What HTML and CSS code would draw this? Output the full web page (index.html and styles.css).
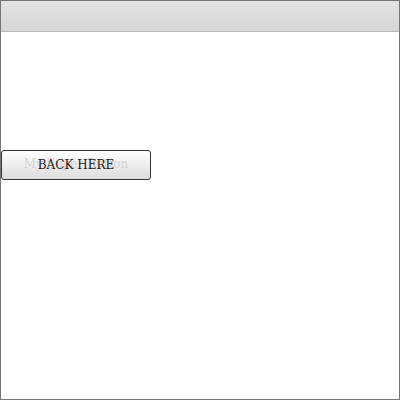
FILE: index.html
```html
<!DOCTYPE html>
<html>
<head>
<meta charset="utf-8">
<link rel="stylesheet" href="styles.css">
</head>
<body>
<div class="frame">
  <div class="header"></div>
  <div class="content">
    <button class="btn">
      <span class="ghost">My Super Button</span>
      <span class="label">BACK HERE</span>
    </button>
  </div>
</div>
</body>
</html>
```
FILE: styles.css
```css
html, body {
  margin: 0;
  padding: 0;
  background: #ffffff;
}
.frame {
  box-sizing: border-box;
  width: 400px;
  height: 400px;
  border: 1px solid #777777;
  display: flex;
  flex-direction: column;
}
.header {
  height: 30px;
  border-bottom: 1px solid #bbbbbb;
  background: linear-gradient(#e3e3e3, #d6d6d6);
}
.content {
  padding-top: 118px;
}
.btn {
  position: relative;
  box-sizing: border-box;
  width: 150px;
  height: 30px;
  margin: 0;
  padding: 0;
  border: 1px solid #333333;
  border-radius: 3px;
  background: linear-gradient(#ffffff, #dddddd);
  font-family: "DejaVu Serif", serif;
  font-size: 12px;
  color: #222222;
  display: flex;
  align-items: center;
  justify-content: center;
}
.ghost {
  position: absolute;
  left: 0;
  right: 0;
  top: 6px;
  text-align: center;
  color: #d4d4d4;
}
.label {
  position: relative;
}
```
